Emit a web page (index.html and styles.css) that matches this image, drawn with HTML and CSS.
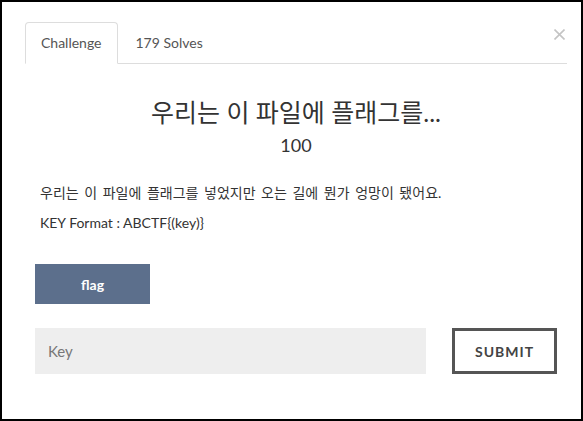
FILE: index.html
```html
<!DOCTYPE html>
<html lang="ko">
<head>
<meta charset="utf-8">
<link rel="stylesheet" href="styles.css">
</head>
<body>
<div class="frame">
  <button class="close" aria-label="Close">
    <svg width="11" height="11" viewBox="0 0 11 11"><path d="M0.5 0.5 L10.5 10.5 M10.5 0.5 L0.5 10.5" stroke="#c4c4c4" stroke-width="1.6" fill="none"/></svg>
  </button>
  <ul class="tabs">
    <li class="tab active">Challenge</li>
    <li class="tab">179 Solves</li>
  </ul>
  <div class="content">
    <h3 class="title">우리는 이 파일에 플래그를...</h3>
    <div class="value">100</div>
    <div class="desc">
      <p class="line kr">우리는 이 파일에 플래그를 넣었지만 오는 길에 뭔가 엉망이 됐어요.</p>
      <p class="line">KEY Format : ABCTF{(key)}</p>
    </div>
    <div class="files">
      <a class="file-btn">flag</a>
    </div>
    <div class="submit-row">
      <input class="key-input" type="text" placeholder="Key">
      <button class="submit">SUBMIT</button>
    </div>
  </div>
</div>
</body>
</html>
```
FILE: styles.css
```css
* { box-sizing: border-box; }
html, body { margin: 0; padding: 0; background: #fff; }
body {
  font-family: Lato, "Noto Sans CJK KR", sans-serif;
  color: #333;
}
.frame {
  position: relative;
  width: 583px;
  height: 421px;
  border: 2px solid #000;
  background: #fff;
  padding: 20px 14px 0 23px;
}
.close {
  position: absolute;
  top: 27px;
  right: 16px;
  padding: 0;
  border: 0;
  background: none;
  line-height: 0;
}
.tabs {
  list-style: none;
  margin: 0;
  padding: 0;
  display: flex;
  border-bottom: 1px solid #ddd;
}
.tab {
  font-size: 14px;
  line-height: 20px;
  padding: 10px 15px;
  margin-right: 2px;
  margin-bottom: -1px;
  border: 1px solid transparent;
  border-radius: 4px 4px 0 0;
  color: #555;
}
.tab.active {
  border-color: #ddd #ddd transparent;
  background: #fff;
}
.content {
  padding: 0 10px;
}
.title {
  margin: 32px 0 0;
  text-align: center;
  font-weight: 400;
  font-size: 25px;
  line-height: 32px;
  color: #333;
}
.value {
  margin-top: 5px;
  text-align: center;
  font-size: 18px;
  line-height: 24px;
  color: #333;
}
.desc {
  margin-top: 26px;
  padding-left: 5px;
}
.line {
  margin: 0;
  font-size: 14px;
  line-height: 20px;
  color: #333;
}
.line.kr { word-spacing: 2px; }
.line + .line { margin-top: 10px; }
.files {
  margin-top: 31px;
  display: flex;
}
.file-btn {
  display: flex;
  align-items: center;
  justify-content: center;
  width: 115px;
  height: 40px;
  background: #5c6f8c;
  color: #fff;
  font-weight: 700;
  font-size: 14px;
}
.submit-row {
  margin-top: 24px;
  display: flex;
  gap: 26px;
}
.key-input {
  flex: 1;
  height: 46px;
  border: 0;
  background: #eee;
  padding: 0 13px;
  font-family: Lato, "Noto Sans CJK KR", sans-serif;
  font-size: 15px;
  color: #333;
  outline: none;
}
.key-input::placeholder { color: #777; }
.submit {
  width: 105px;
  height: 46px;
  border: 3px solid #555;
  background: #fff;
  font-family: Lato, sans-serif;
  font-weight: 700;
  font-size: 14px;
  letter-spacing: 1px;
  color: #444;
  padding: 0;
}
```
